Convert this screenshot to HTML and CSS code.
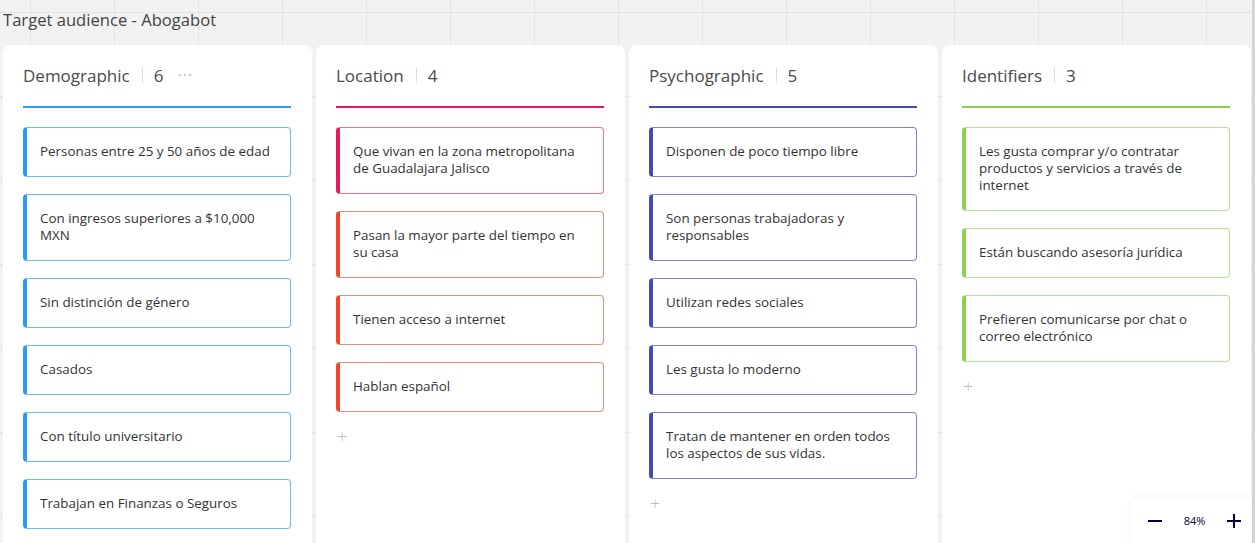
FILE: index.html
```html
<!DOCTYPE html>
<html lang="es">
<head>
<meta charset="utf-8">
<title>Target audience - Abogabot</title>
<link rel="stylesheet" href="styles.css">
</head>
<body>
<div class="board">
  <div class="title">Target audience - Abogabot</div>
  <div class="columns">
    <section class="column col-blue">
      <header class="col-head">
        <span class="col-name">Demographic</span>
        <span class="sep"></span>
        <span class="col-count">6</span>
        <span class="dots">···</span>
      </header>
      <div class="underline"></div>
      <div class="cards">
        <div class="card">Personas entre 25 y 50 años de edad</div>
        <div class="card">Con ingresos superiores a $10,000 MXN</div>
        <div class="card">Sin distinción de género</div>
        <div class="card">Casados</div>
        <div class="card">Con título universitario</div>
        <div class="card">Trabajan en Finanzas o Seguros</div>
      </div>
    </section>
    <section class="column col-pink">
      <header class="col-head">
        <span class="col-name">Location</span>
        <span class="sep"></span>
        <span class="col-count">4</span>
      </header>
      <div class="underline"></div>
      <div class="cards">
        <div class="card">Que vivan en la zona metropolitana de Guadalajara Jalisco</div>
        <div class="card card-orange">Pasan la mayor parte del tiempo en su casa</div>
        <div class="card card-orange">Tienen acceso a internet</div>
        <div class="card card-orange">Hablan español</div>
      </div>
      <div class="add">+</div>
    </section>
    <section class="column col-indigo">
      <header class="col-head">
        <span class="col-name">Psychographic</span>
        <span class="sep"></span>
        <span class="col-count">5</span>
      </header>
      <div class="underline"></div>
      <div class="cards">
        <div class="card">Disponen de poco tiempo libre</div>
        <div class="card">Son personas trabajadoras y responsables</div>
        <div class="card">Utilizan redes sociales</div>
        <div class="card">Les gusta lo moderno</div>
        <div class="card">Tratan de mantener en orden todos los aspectos de sus vidas.</div>
      </div>
      <div class="add">+</div>
    </section>
    <section class="column col-green">
      <header class="col-head">
        <span class="col-name">Identifiers</span>
        <span class="sep"></span>
        <span class="col-count">3</span>
      </header>
      <div class="underline"></div>
      <div class="cards">
        <div class="card">Les gusta comprar y/o contratar productos y servicios a través de internet</div>
        <div class="card">Están buscando asesoría jurídica</div>
        <div class="card">Prefieren comunicarse por chat o correo electrónico</div>
      </div>
      <div class="add">+</div>
    </section>
  </div>
  <div class="zoom-ctl">
    <span class="zbtn">
      <svg width="16" height="16" viewBox="0 0 16 16"><path d="M1 8h14" stroke="#050038" stroke-width="2"/></svg>
    </span>
    <span class="zval">84%</span>
    <span class="zbtn">
      <svg width="16" height="16" viewBox="0 0 16 16"><path d="M1 8h14M8 1v14" stroke="#050038" stroke-width="2"/></svg>
    </span>
  </div>
</div>
</body>
</html>
```
FILE: styles.css
```css
* { box-sizing: border-box; }
html, body {
  margin: 0;
  padding: 0;
  height: 100%;
  overflow: hidden;
}
body {
  font-family: "Open Sans", "Liberation Sans", sans-serif;
  background-color: #f2f2f2;
  background-image:
    linear-gradient(to right, #e4e4e4 1px, transparent 1px),
    linear-gradient(to bottom, #e4e4e4 1px, transparent 1px);
  background-size: 84px 84px;
  background-position: 30px 12px;
}
.board {
  position: relative;
  height: 543px;
  border-right: 3px solid #d6d6d6;
}
.title {
  height: 45px;
  padding: 8px 0 0 3px;
  font-size: 16.6px;
  line-height: 24px;
  color: #444;
}
.columns {
  display: flex;
  gap: 4px;
  padding-left: 3px;
  height: 498px;
}
.column {
  width: 309px;
  flex: none;
  background: #fff;
  border-radius: 8px 8px 0 0;
  padding: 19px 21px 0 20px;
}
.col-head {
  display: flex;
  align-items: center;
  height: 22px;
  font-size: 17px;
  color: #4a4a4a;
}
.sep {
  width: 1px;
  height: 15px;
  background: #dcdcdc;
  margin: 0 11px 0 12px;
}
.dots {
  margin-left: 14px;
  color: #b8b8b8;
  font-size: 16px;
  letter-spacing: 1px;
  line-height: 10px;
  position: relative;
  top: 0;
}
.underline {
  height: 2px;
  margin-top: 20px;
  background: var(--c);
}
.cards {
  display: flex;
  flex-direction: column;
  gap: 17px;
  margin-top: 19px;
}
.card {
  border: 1px solid var(--cl);
  border-left: 4px solid var(--c);
  border-radius: 4px;
  padding: 15px 16px 16px 13px;
  font-size: 13.4px;
  line-height: 17px;
  color: #333;
}
.card-orange {
  --c: #f24726;
  --cl: #ee8c77;
}
.col-blue { --c: #2d9bf0; --cl: #6cbcf3; }
.col-pink { --c: #e6185e; --cl: #ee6f9b; }
.col-indigo { --c: #414bb2; --cl: #8085c7; }
.col-green { --c: #8fd14f; --cl: #b6e291; }
.add {
  margin-top: 14px;
  padding-left: 1px;
  font-size: 18px;
  line-height: 20px;
  color: #bdbdbd;
  font-weight: 300;
}
.zoom-ctl {
  position: absolute;
  right: 0;
  bottom: 0;
  width: 121px;
  height: 45px;
  background: #fff;
  border-radius: 4px 0 0 0;
  box-shadow: 0 0 6px rgba(0,0,0,0.06);
  display: flex;
  align-items: center;
  justify-content: space-between;
  padding: 0 10px 0 16px;
  color: #050038;
}
.zval {
  font-size: 11px;
  color: #050038;
}
.zbtn { display: flex; }
```
